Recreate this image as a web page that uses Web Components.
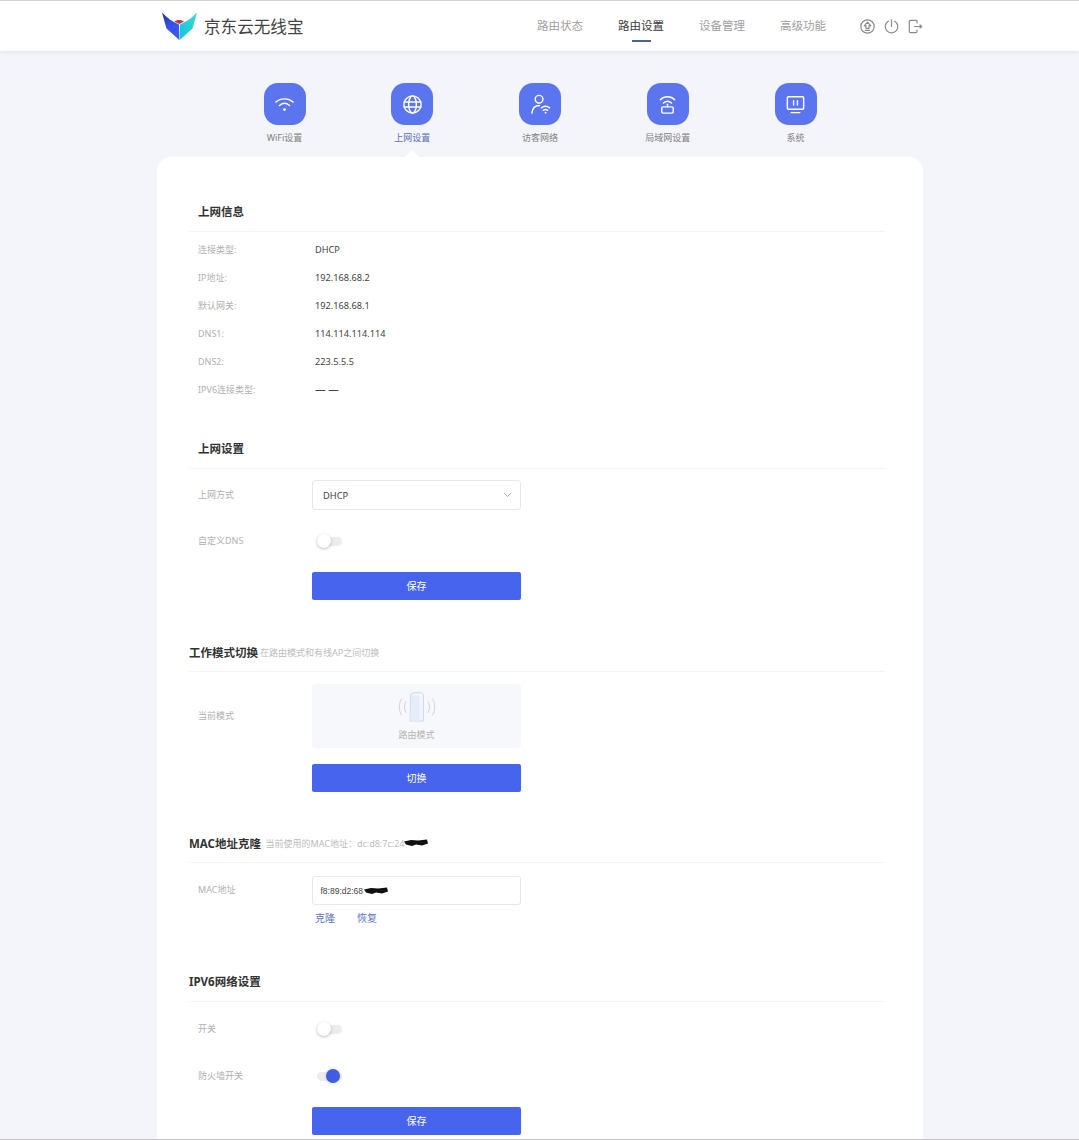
<!DOCTYPE html>
<html lang="zh-CN">
<head>
<meta charset="utf-8">
<title>京东云无线宝</title>
<style>
  html, body { margin: 0; padding: 0; }
  body {
    height: 1138px;
    overflow: hidden;
    background: #f3f5fa;
    border-top: 1px solid #d2d2d2;
    border-bottom: 1px solid #c4c4c4;
    font-family: "Noto Sans", "Noto Sans CJK SC", sans-serif;
  }
</style>
</head>
<body>
  <app-header></app-header>

  <settings-nav>
    <nav-item label="WiFi设置" icon="wifi"></nav-item>
    <nav-item label="上网设置" icon="globe" active></nav-item>
    <nav-item label="访客网络" icon="guest"></nav-item>
    <nav-item label="局域网设置" icon="lan"></nav-item>
    <nav-item label="系统" icon="system"></nav-item>
  </settings-nav>

  <settings-card>
    <settings-section heading="上网信息" indent>
      <info-row label="连接类型:" value="DHCP"></info-row>
      <info-row label="IP地址:" value="192.168.68.2"></info-row>
      <info-row label="默认网关:" value="192.168.68.1"></info-row>
      <info-row label="DNS1:" value="114.114.114.114"></info-row>
      <info-row label="DNS2:" value="223.5.5.5"></info-row>
      <info-row label="IPV6连接类型:" value="— —" style="--value-size:10.500px"></info-row>
    </settings-section>

    <settings-section heading="上网设置" indent style="margin-top:27px">
      <form-row label="上网方式" style="margin-top:11px"><select-box value="DHCP"></select-box></form-row>
      <form-row label="自定义DNS" style="margin-top:21px"><toggle-switch></toggle-switch></form-row>
      <form-row style="margin-top:21px"><primary-button>保存</primary-button></form-row>
    </settings-section>

    <settings-section heading="工作模式切换" sub="在路由模式和有线AP之间切换" style="margin-top:33px;--sub-gap:2px">
      <form-row label="当前模式" style="margin-top:12px"><mode-box>路由模式</mode-box></form-row>
      <form-row style="margin-top:16px"><primary-button>切换</primary-button></form-row>
    </settings-section>

    <settings-section heading="MAC地址克隆" sub="当前使用的MAC地址：dc:d8:7c:24" redact style="margin-top:32px;--sub-gap:4.500px">
      <form-row label="MAC地址" style="margin-top:13px"><mac-input value="f8:89:d2:68"></mac-input></form-row>
      <form-row style="margin-top:6px"><link-pair first="克隆" second="恢复"></link-pair></form-row>
    </settings-section>

    <settings-section heading="IPV6网络设置" style="margin-top:38px">
      <form-row label="开关" style="margin-top:17px"><toggle-switch></toggle-switch></form-row>
      <form-row label="防火墙开关" style="margin-top:27px"><toggle-switch on></toggle-switch></form-row>
      <form-row style="margin-top:21px"><primary-button>保存</primary-button></form-row>
    </settings-section>
  </settings-card>

<script>
  const REDACT = '<svg width="24" height="8" viewBox="0 0 24 8"><path d="M0 2.500 L7 1 L14 1.500 L23 .5 L24 4.500 L18 6.500 L12 5.500 L8 7 L2 5.500 Z" fill="#111"/></svg>';

  // Icones des tuiles du menu (boite 24x24, trait blanc)
  const TILE_ICONS = {
    wifi: '<path d="M3 9.500 C8 5 16 5 21 9.500"/><path d="M6.800 13 C10 10.300 14 10.300 17.200 13"/><circle cx="12" cy="17.300" r="1.500" fill="#fff" stroke="none"/>',
    globe: '<circle cx="12" cy="12" r="9"/><ellipse cx="12" cy="12" rx="4" ry="9"/><path d="M3.300 9.300H20.700M3.300 14.700H20.700"/>',
    guest: '<circle cx="10.500" cy="6.500" r="4"/><path d="M3 21 C3.500 15.500 7 13 11 13"/><path d="M13 15.500 C15.500 13.500 19 13.500 21.500 15.500"/><path d="M15 18 C16.500 16.900 18 16.900 19.500 18"/><circle cx="17.300" cy="20.500" r="1" fill="#fff" stroke="none"/>',
    lan: '<path d="M4.500 7 C8.500 3 15.500 3 19.500 7"/><path d="M7.800 10.500 C10.300 8.300 13.700 8.300 16.200 10.500"/><path d="M12 11.800V14.500"/><rect x="6" y="14.500" width="12" height="6.500" rx="1.500"/>',
    system: '<rect x="3.500" y="4" width="17" height="13" rx="1"/><path d="M10 8V12.500M14 8V12.500M7.500 20.500H16.500"/>'
  };

  class AppHeader extends HTMLElement {
    constructor() {
      super();
      this.attachShadow({ mode: 'open' });
      this.shadowRoot.innerHTML = `
        <style>
          :host {
            display: flex;
            align-items: center;
            height: 50px;
            padding: 0 156px 0 162px;
            background: #fff;
            box-shadow: 0 1px 4px rgba(90, 100, 140, .12);
            position: relative;
          }
          .brand { display: flex; align-items: center; gap: 7px; }
          .brand span { font-size: 16.600px; color: #444; }
          nav { display: flex; gap: 35px; margin-left: auto; margin-right: 34px; }
          a { display: block; position: relative; font-size: 11.500px; line-height: 50px; height: 50px; color: #a0a0a0; }
          a.on { color: #3a3a3a; }
          a.on::after {
            content: ''; position: absolute; left: 14px; width: 19px; top: 39px; height: 2px; background: #4a6496;
          }
          .tools { display: flex; gap: 9px; }
          svg.tool { fill: none; stroke: #8b8b8b; stroke-width: 1.200; stroke-linecap: round; stroke-linejoin: round; }
        </style>
        <div class="brand">
          <svg width="35" height="29" viewBox="0 0 35 29">
            <defs>
              <linearGradient id="lw" x1="0" y1="0" x2="1" y2="1">
                <stop offset="0" stop-color="#24307e"/><stop offset=".45" stop-color="#3550ea"/><stop offset="1" stop-color="#3a5cf2"/>
              </linearGradient>
              <linearGradient id="rw" x1="1" y1="0" x2="0" y2="1">
                <stop offset="0" stop-color="#3fdcc4"/><stop offset="1" stop-color="#12bfe8"/>
              </linearGradient>
            </defs>
            <path d="M0 .5 C5 6 11 10 17 12.500 L17.300 28 L4.500 16.500 Z" fill="url(#lw)"/>
            <path d="M35 .5 C30 6 24 10 18 12.500 L17.700 28 L30.500 16.500 Z" fill="url(#rw)"/>
            <path d="M12.500 9.500 C14 7.500 20 7.500 22 9.500 C20 10.800 18.500 11.500 17.500 12 C16 11.500 14 10.800 12.500 9.500 Z" fill="#b8404f"/>
          </svg>
          <span>京东云无线宝</span>
        </div>
        <nav>
          <a>路由状态</a><a class="on">路由设置</a><a>设备管理</a><a>高级功能</a>
        </nav>
        <div class="tools">
          <svg class="tool" width="15" height="15" viewBox="0 0 15 15">
            <circle cx="7.500" cy="7.500" r="6.700"/>
            <path d="M7.500 3.200 L10.800 6.800 H9 V9.300 H6 V6.800 H4.200 Z"/><path d="M5.500 11.300H9.500"/>
          </svg>
          <svg class="tool" width="15" height="15" viewBox="0 0 15 15">
            <path d="M4.300 2.200 A6.300 6.300 0 1 0 10.700 2.200"/><path d="M7.500 0.800V7.500"/>
          </svg>
          <svg class="tool" width="15" height="15" viewBox="0 0 15 15">
            <path d="M9 4V2.500 A1.200 1.200 0 0 0 7.800 1.300 H2.500 A1.200 1.200 0 0 0 1.300 2.500 V12.500 A1.200 1.200 0 0 0 2.500 13.700 H7.800 A1.200 1.200 0 0 0 9 12.500 V11"/>
            <path d="M6.500 7.500H13.700M12 6L13.700 7.500L12 9"/>
          </svg>
        </div>
      `;
    }
  }

  class SettingsNav extends HTMLElement {
    constructor() {
      super();
      this.attachShadow({ mode: 'open' });
      this.shadowRoot.innerHTML = `
        <style>
          :host { display: flex; justify-content: center; padding: 32px 0 0 1px; }
        </style>
        <slot></slot>
      `;
    }
  }

  class NavItem extends HTMLElement {
    connectedCallback() {
      if (this.shadowRoot) return;
      this.attachShadow({ mode: 'open' });
      const active = this.hasAttribute('active');
      this.shadowRoot.innerHTML = `
        <style>
          :host {
            display: flex; flex-direction: column; align-items: center;
            width: 127.750px; height: 74px; position: relative;
          }
          .tile {
            width: 42px; height: 42px; border-radius: 14px; background: #5b75ef;
            display: flex; align-items: center; justify-content: center;
          }
          svg { fill: none; stroke: #fff; stroke-width: 1.500; stroke-linecap: round; stroke-linejoin: round; }
          .label { margin-top: 6px; font-size: 9px; line-height: 13px; color: ${active ? '#5d70b4' : '#828282'}; }
          .arrow {
            position: absolute; left: 50%; bottom: 0; margin-left: -8px;
            border: 8px solid transparent; border-top: 0; border-bottom: 7px solid #fff;
          }
        </style>
        <div class="tile"><svg width="23" height="23" viewBox="0 0 24 24">${TILE_ICONS[this.getAttribute('icon')]}</svg></div>
        <div class="label">${this.getAttribute('label')}</div>
        ${active ? '<div class="arrow"></div>' : ''}
      `;
    }
  }

  class SettingsCard extends HTMLElement {
    constructor() {
      super();
      this.attachShadow({ mode: 'open' });
      this.shadowRoot.innerHTML = `
        <style>
          :host {
            display: block;
            width: 696px;
            height: 1000px;
            margin-left: 157px;
            padding: 36px 38px 0 32px;
            background: #fff;
            border-radius: 14px 14px 0 0;
          }
        </style>
        <slot></slot>
      `;
    }
  }

  class SettingsSection extends HTMLElement {
    connectedCallback() {
      if (this.shadowRoot) return;
      this.attachShadow({ mode: 'open' });
      const sub = this.getAttribute('sub');
      this.shadowRoot.innerHTML = `
        <style>
          :host { display: block; }
          .head {
            display: flex; align-items: center; box-sizing: border-box; height: 39px;
            padding-bottom: ${sub ? 0 : 2}px;
            border-bottom: 1px solid #f3f4f7;
            padding-left: ${this.hasAttribute('indent') ? 9 : 0}px;
          }
          h3 { margin: 0; font-size: 11.500px; font-weight: 700; color: #333; }
          small { display: flex; align-items: center; margin-left: var(--sub-gap, 3px); font-size: 9px; color: #bcbcbc; }
          .info { padding-top: 3px; }
        </style>
        <div class="head">
          <h3>${this.getAttribute('heading')}</h3>
          ${sub ? `<small>${sub}${this.hasAttribute('redact') ? REDACT : ''}</small>` : ''}
        </div>
        <div class="${this.querySelector('info-row') ? 'info' : ''}"><slot></slot></div>
      `;
    }
  }

  class InfoRow extends HTMLElement {
    connectedCallback() {
      if (this.shadowRoot) return;
      this.attachShadow({ mode: 'open' });
      this.shadowRoot.innerHTML = `
        <style>
          :host {
            display: grid; grid-template-columns: 117px 1fr; align-items: center;
            box-sizing: border-box; height: 28px; padding-left: 9px; font-size: 9px;
          }
          .k { color: #b0b0b0; }
          .v { color: #444; font-size: var(--value-size, 9.200px); }
        </style>
        <span class="k">${this.getAttribute('label')}</span>
        <span class="v">${this.getAttribute('value')}</span>
      `;
    }
  }

  class FormRow extends HTMLElement {
    connectedCallback() {
      if (this.shadowRoot) return;
      this.attachShadow({ mode: 'open' });
      this.shadowRoot.innerHTML = `
        <style>
          :host {
            display: grid; grid-template-columns: 114px 209px; align-items: center;
            padding-left: 9px; font-size: 9px; color: #b0b0b0;
          }
          span { margin-top: -2px; }
        </style>
        <span>${this.getAttribute('label') || ''}</span>
        <slot></slot>
      `;
    }
  }

  class SelectBox extends HTMLElement {
    connectedCallback() {
      if (this.shadowRoot) return;
      this.attachShadow({ mode: 'open' });
      this.shadowRoot.innerHTML = `
        <style>
          :host {
            display: flex; align-items: center; justify-content: space-between;
            box-sizing: border-box; height: 30px; padding: 0 8px 0 10px;
            border: 1px solid #e6e8ec; border-radius: 3px; background: #fff;
            font-size: 9.300px; color: #444;
          }
          svg { fill: none; stroke: #a8a8a8; stroke-width: 1; }
        </style>
        <span>${this.getAttribute('value')}</span>
        <svg width="9" height="6" viewBox="0 0 9 6"><path d="M1 1L4.500 4.500L8 1"/></svg>
      `;
    }
  }

  class ToggleSwitch extends HTMLElement {
    connectedCallback() {
      if (this.shadowRoot) return;
      this.attachShadow({ mode: 'open' });
      const on = this.hasAttribute('on');
      this.shadowRoot.innerHTML = `
        <style>
          :host { display: flex; align-items: center; height: 20px; margin-left: 5px; }
          .track { position: relative; width: 25px; height: 9px; border-radius: 5px; background: #ececf0; }
          .knob {
            position: absolute; top: -2.500px; left: ${on ? 9 : 0}px;
            width: 14px; height: 14px; border-radius: 50%;
            background: ${on ? '#3f5ce2' : '#fff'};
            box-shadow: ${on ? '0 0 3px rgba(63,92,226,.3)' : '0 1px 3px rgba(0,0,0,.28)'};
          }
        </style>
        <div class="track"><div class="knob"></div></div>
      `;
    }
  }

  class PrimaryButton extends HTMLElement {
    constructor() {
      super();
      this.attachShadow({ mode: 'open' });
      this.shadowRoot.innerHTML = `
        <style>
          :host {
            display: flex; align-items: center; justify-content: center;
            box-sizing: border-box; height: 28px; padding-bottom: 2px; border-radius: 2px; background: #4764ef;
            color: #fff; font-size: 10px;
          }
        </style>
        <slot></slot>
      `;
    }
  }

  class ModeBox extends HTMLElement {
    constructor() {
      super();
      this.attachShadow({ mode: 'open' });
      this.shadowRoot.innerHTML = `
        <style>
          :host {
            display: flex; flex-direction: column; align-items: center;
            height: 64px; box-sizing: border-box; padding-top: 7px;
            border-radius: 4px; background: #f7f8fb; color: #b4b4b4; font-size: 9px;
          }
          svg { fill: none; stroke-linecap: round; }
          span { margin-top: 5px; line-height: 13px; }
        </style>
        <svg width="40" height="32" viewBox="0 0 40 32">
          <path d="M13.500 3.500 C13.500 1 26.500 1 26.500 3.500 V30 H13.500 Z" fill="#f3f6fd" stroke="#cdd8f0"/>
          <path d="M13.800 4.500 H22.500 V30 H13.800 Z" fill="#e6ecfa"/>
          <path d="M9 10.500 C7 13.500 7 18.500 9 21.500M4.500 8 C1.500 12 1.500 20 4.500 24" stroke="#ccd3e3"/>
          <path d="M31 10.500 C33 13.500 33 18.500 31 21.500M35.500 8 C38.500 12 38.500 20 35.500 24" stroke="#ccd3e3"/>
        </svg>
        <span><slot></slot></span>
      `;
    }
  }

  class MacInput extends HTMLElement {
    connectedCallback() {
      if (this.shadowRoot) return;
      this.attachShadow({ mode: 'open' });
      this.shadowRoot.innerHTML = `
        <style>
          :host {
            display: flex; align-items: center;
            box-sizing: border-box; height: 29px; padding-left: 7.500px;
            border: 1px solid #e6e8ec; border-radius: 3px; background: #fff;
            font-family: "Liberation Sans", Arial, sans-serif; font-size: 8.500px; color: #444;
          }
          svg { margin-left: 1px; }
        </style>
        <span>${this.getAttribute('value')}</span>${REDACT}
      `;
    }
  }

  class LinkPair extends HTMLElement {
    connectedCallback() {
      if (this.shadowRoot) return;
      this.attachShadow({ mode: 'open' });
      this.shadowRoot.innerHTML = `
        <style>
          :host { display: flex; gap: 22px; padding-left: 3px; font-size: 10px; line-height: 14px; color: #5c72c0; }
        </style>
        <a>${this.getAttribute('first')}</a><a>${this.getAttribute('second')}</a>
      `;
    }
  }

  customElements.define('app-header', AppHeader);
  customElements.define('settings-nav', SettingsNav);
  customElements.define('nav-item', NavItem);
  customElements.define('settings-card', SettingsCard);
  customElements.define('settings-section', SettingsSection);
  customElements.define('info-row', InfoRow);
  customElements.define('form-row', FormRow);
  customElements.define('select-box', SelectBox);
  customElements.define('toggle-switch', ToggleSwitch);
  customElements.define('primary-button', PrimaryButton);
  customElements.define('mode-box', ModeBox);
  customElements.define('mac-input', MacInput);
  customElements.define('link-pair', LinkPair);
</script>
</body>
</html>
